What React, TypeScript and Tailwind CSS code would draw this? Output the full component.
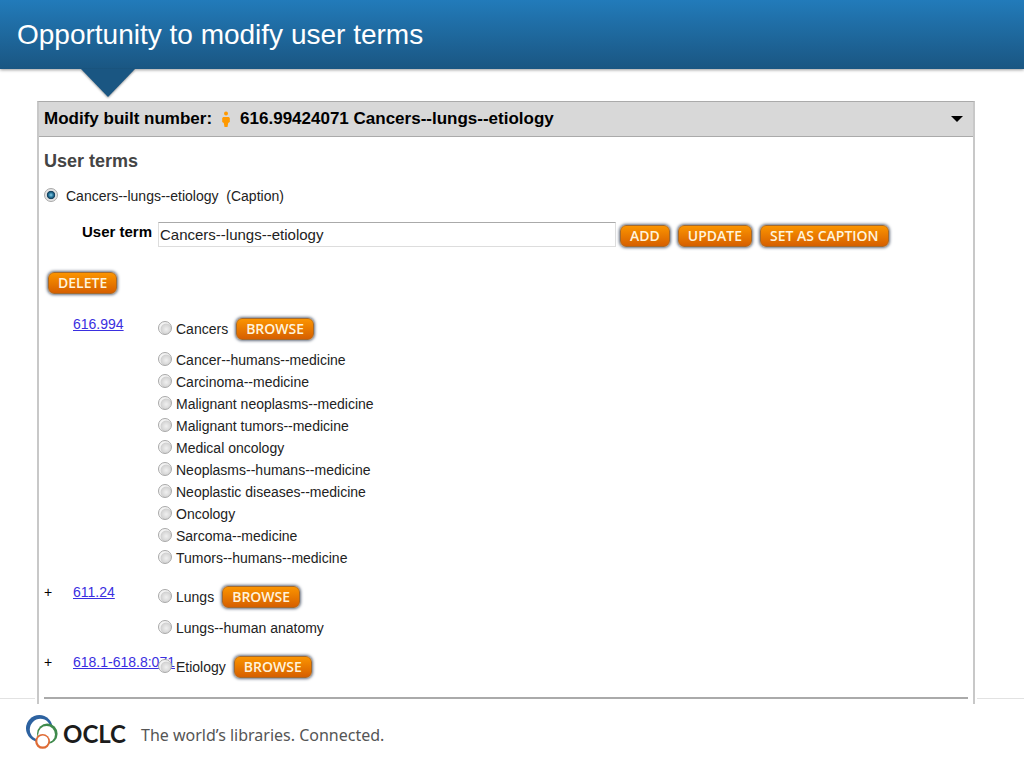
import { useState, type ReactNode } from "react";

const groups = [
  {
    id: "616.994",
    expandable: false,
    main: "Cancers",
    terms: [
      "Cancer--humans--medicine",
      "Carcinoma--medicine",
      "Malignant neoplasms--medicine",
      "Malignant tumors--medicine",
      "Medical oncology",
      "Neoplasms--humans--medicine",
      "Neoplastic diseases--medicine",
      "Oncology",
      "Sarcoma--medicine",
      "Tumors--humans--medicine",
    ],
  },
  { id: "611.24", expandable: true, main: "Lungs", terms: ["Lungs--human anatomy"] },
  { id: "618.1-618.8:071", expandable: true, main: "Etiology", terms: [] },
];

const caption = "Cancers--lungs--etiology";

function OrangeButton({ children }: { children: ReactNode }) {
  return (
    <button
      type="button"
      className="h-[22px] shrink-0 rounded-md border border-[#a56a2c] bg-linear-to-b from-[#fb9400] to-[#d65f00] px-[9px] font-['Open_Sans',sans-serif] text-sm leading-5 font-semibold whitespace-nowrap text-[#fff3dc] shadow-[0_0_3px_1px_#667080]"
    >
      {children}
    </button>
  );
}

function TermRadio({ term, selected, onSelect }: { term: string; selected: string; onSelect: (t: string) => void }) {
  const isCaption = term === caption;
  return (
    <label className={isCaption ? "flex items-center gap-2" : "flex items-center gap-1"}>
      <input
        type="radio"
        name="term"
        checked={selected === term}
        onChange={() => onSelect(term)}
        className="relative mb-[3px] size-[14px] shrink-0 appearance-none rounded-full border border-[#a8a8a8] bg-[radial-gradient(circle_at_60%_60%,#f0f0f0_0,#d6d6d6_45%,#d0d0d0_50%,#f4f4f4_60%)] checked:bg-[radial-gradient(circle_at_50%_50%,#8fd0ea_0,#2a7ba0_25%,#123e5c_44%,#e4e4e4_54%)]"
      />
      <span className="whitespace-nowrap">{isCaption ? `${term}\u00a0 (Caption)` : term}</span>
    </label>
  );
}

function Person() {
  return (
    <svg viewBox="0 0 8 16" className="h-4 w-2" fill="#f90" aria-hidden="true">
      <circle cx="4" cy="2.6" r="2" />
      <path d="M1.2 6h5.6l1 1v4l-1.6 1-.7 4h-3l-.7-4-1.6-1V7z" />
    </svg>
  );
}

function Logo() {
  return (
    <svg viewBox="0 0 34 36" className="h-9 w-[34px]" aria-hidden="true">
      <circle cx="14.3" cy="14.3" r="13.3" fill="#2d62a0" />
      <circle cx="15.4" cy="15.4" r="10.6" fill="#fff" />
      <circle cx="22.3" cy="19.8" r="10.3" fill="#3f8a4c" />
      <circle cx="21.6" cy="20.4" r="8.4" fill="#fff" />
      <circle cx="17.6" cy="27.4" r="7.4" fill="#df6b35" />
      <circle cx="17.8" cy="27" r="5.5" fill="#fff" />
    </svg>
  );
}

export default function App() {
  const [selected, setSelected] = useState(caption);
  const [userTerm, setUserTerm] = useState(caption);

  return (
    <div className="min-h-screen bg-white font-['Liberation_Sans',Arial,sans-serif] text-sm text-[#222]">
      <header className="relative mb-8 flex h-[69px] items-center bg-linear-to-b from-[#227bba] to-[#1a5682] pl-[17px] shadow-[0_1px_3px_#0006]">
        <h1 className="text-[28px] leading-9 text-white">Opportunity to modify user terms</h1>
        <svg
          viewBox="0 0 54 28"
          className="absolute top-full left-[81px] h-7 w-[54px] drop-shadow-[0_1px_1px_#0006]"
          aria-hidden="true"
        >
          <path d="M0 0h54L27 28z" fill="#1a5682" />
        </svg>
      </header>

      <div className="flex items-end">
        <div className="mb-[5px] h-px w-[35px] shrink-0 bg-[#e2e2e2]" />
        <main className="mr-[2px] ml-[2px] min-w-0 flex-1 border-x-2 border-t border-x-[#c8c8c8] border-t-[#aaa]">
          <div className="flex h-[35px] items-center border-b border-[#aaa] bg-[#d8d8d8] pr-[10px] pl-[5px]">
            <h2 className="flex items-center text-[17px] font-bold text-black">
              Modify built number:
              <span className="mx-[10px]">
                <Person />
              </span>
              616.99424071 Cancers--lungs--etiology
            </h2>
            <button type="button" aria-label="Collapse" className="ml-auto">
              <svg viewBox="0 0 12 6" className="h-[6px] w-3" aria-hidden="true">
                <path d="M0 0h12L6 6z" fill="#000" />
              </svg>
            </button>
          </div>

          <div className="px-[5px] pt-3 pb-[5px]">
            <h3 className="text-lg leading-6 font-bold text-[#444]">User terms</h3>
            <div className="mt-[13px] leading-5">
              <TermRadio term={caption} selected={selected} onSelect={setSelected} />
            </div>

            <div className="mt-4 flex items-end gap-2">
              <div className="flex shrink-0">
                <label htmlFor="user-term" className="w-[114px] pr-[6px] text-right text-[15px] leading-5 font-bold text-black">
                  User term
                </label>
                <input
                  id="user-term"
                  value={userTerm}
                  onChange={(e) => setUserTerm(e.target.value)}
                  className="-mr-1 h-[25px] w-[458px] border border-[#ddd] border-t-[#aaa] px-px text-[15px]"
                />
              </div>
              <OrangeButton>ADD</OrangeButton>
              <OrangeButton>UPDATE</OrangeButton>
              <OrangeButton>SET AS CAPTION</OrangeButton>
            </div>

            <div className="mt-[25px] ml-1 flex">
              <OrangeButton>DELETE</OrangeButton>
            </div>

            <div className="mt-5 flex flex-col gap-[14px]">
              {groups.map((group) => (
                <section key={group.id} className="grid grid-cols-[29px_85px_1fr] leading-5">
                  <span className="text-black">{group.expandable ? "+" : ""}</span>
                  <a href="#" className="whitespace-nowrap text-[#3a2fe0] underline">
                    {group.id}
                  </a>
                  <div className="pt-1">
                    <div className="flex h-[22px] items-center gap-2">
                      <TermRadio term={group.main} selected={selected} onSelect={setSelected} />
                      <OrangeButton>BROWSE</OrangeButton>
                    </div>
                    {group.terms.length > 0 && (
                      <div className="mt-[10px] flex flex-col gap-[2px]">
                        {group.terms.map((term) => (
                          <TermRadio key={term} term={term} selected={selected} onSelect={setSelected} />
                        ))}
                      </div>
                    )}
                  </div>
                </section>
              ))}
            </div>
            <hr className="mt-[19px] border-t-2 border-[#aaa]" />
          </div>
        </main>
        <div className="mb-[5px] h-px w-[47px] shrink-0 bg-[#e2e2e2]" />
      </div>

      <footer className="flex items-center pt-[10px] pl-[25px]">
        <Logo />
        <span className="ml-1 pt-1 font-['Lato',sans-serif] text-2xl font-bold text-[#1c1c1c]">OCLC</span>
        <span className="ml-[15px] pt-[6px] font-['Noto_Sans',sans-serif] text-base text-[#555]">
          The world’s libraries. Connected.
        </span>
      </footer>
    </div>
  );
}
